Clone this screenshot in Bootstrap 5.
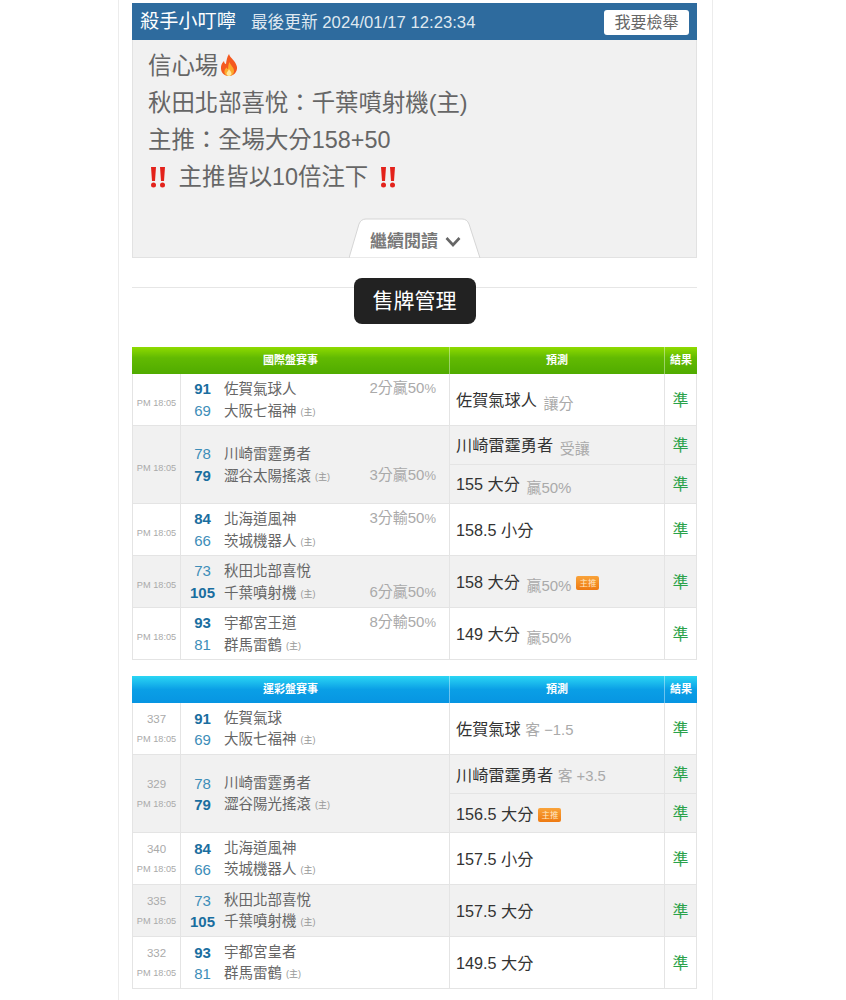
<!DOCTYPE html>
<html lang="zh-Hant"><head><meta charset="utf-8"><title>售牌管理</title>
<link href="https://cdn.jsdelivr.net/npm/bootstrap@5.3.0/dist/css/bootstrap.min.css" rel="stylesheet">
<style>
html,body{height:1000px;overflow:hidden}
body{background:#fff;font-family:"Liberation Sans","Noto Sans CJK TC",sans-serif;color:#333}
.shell{width:595px;height:1000px;margin-left:118px;border-left:1px solid #ececec;border-right:1px solid #ececec;padding:3px 15px 0 13px}
.topbar{height:37px;background:#2e6b9e;padding:2px 8px 0;font-size:16.7px;color:#dfe8f0}
.topbar b{font-weight:400;font-size:19.2px;color:#fff;margin-right:15px}
.checkbtn{background:#fff;color:#666;font-size:16px;width:85px;height:25px;line-height:25px;border-radius:3px;text-align:center}
.post{height:218px;background:#f1f1f1;border:1px solid #e2e2e2;border-top:0;padding:8px 15px;font-size:23.4px;line-height:37px;color:#666}
.post>div:not(.moretab){height:37px}
.post svg{vertical-align:-3px}
.bang-l{margin-right:4px}
.bang-r{margin-left:3px}
.moretab{position:absolute;left:216px;bottom:-1px;width:134px;height:40px;color:#777;font-size:17px;font-weight:700;padding-top:10px;padding-left:21px;line-height:28px}
.moretab>svg.shape{position:absolute;left:0;top:0}
.moretab span,.moretab .chev{position:relative}
.secthead{margin-top:20px;margin-bottom:23px;background:linear-gradient(#e6e6e6,#e6e6e6) 0 9px/100% 1px no-repeat}
.sectlabel{width:122px;height:46px;line-height:45px;background:#222;color:#fff;font-size:21px;border-radius:8px;text-align:center}
table.sheet{table-layout:fixed;width:565px;margin-bottom:16px;border-collapse:separate;border-spacing:0;color:#444}
table.sheet td{border:0 solid #e4e4e4;border-right-width:1px;border-bottom-width:1px;padding:0;vertical-align:middle}
table.sheet tr>td.timecell{border-left-width:1px}
table.sheet th{height:27px;font-size:11px;font-weight:700;color:#fff;text-align:center;padding:0;border-right:1px solid rgba(255,255,255,.4)}
table.sheet th:last-child{border-right:0}
.green th{background:linear-gradient(#8fdb00,#62ba02 40%,#50ab00)}
.blue th{background:linear-gradient(#2bd6f4,#0a9fe6 50%,#0795e2)}
table.sheet tr.shade td{background:#f1f1f1}
.timecell{text-align:center;color:#aaa;font-size:9.2px;line-height:20px}
.green .timecell{padding-top:7px!important}
.timecell em{display:block;font-style:normal;font-size:11.5px}
.pair{display:flex;flex-direction:column;padding-right:13px}
.tm{display:flex;height:22px;line-height:22px;align-items:center;font-size:14.5px;color:#666}
.blue .tm{height:21px;line-height:21px}
.tm u{text-decoration:none;width:43px;text-align:center;font-size:15px;color:#3d8db8;flex:none}
.tm u.win{font-weight:700;color:#1a6e9f}
.tm i{font-style:normal;font-size:9px;color:#999;margin-left:4px;margin-top:2px}
.tm s{text-decoration:none;margin-left:auto;color:#aaa;font-size:15px}
.tm s small{font-size:13px}
.tip{padding-left:6px!important;padding-top:2px!important;font-size:16.2px;color:#333;white-space:nowrap}
.tip.dip{padding-top:4px!important}
.tip span{color:#aaa;font-size:15px;margin-left:2px;vertical-align:-3px}
.tip span.flat{vertical-align:0;margin-left:0;font-size:14.8px}
.host{display:inline-block;width:23px;height:14px;line-height:14px;font-size:8.5px;font-weight:400;text-align:center;color:#ffe9c4;background:linear-gradient(#f9a33a,#ee7a12);border-radius:2px;vertical-align:2px;margin-left:5px}
.ok{text-align:center;color:#2aa24a;font-size:16px;padding-top:2px!important}
.h52{height:52px}.h39{height:39px}
</style></head><body>
<div class="shell">
<div class="topbar d-flex align-items-center"><b>殺手小叮嚀</b><span>最後更新 2024/01/17 12:23:34</span><div class="checkbtn ms-auto">我要檢舉</div></div>
<div class="post position-relative">
<div>信心場<svg width="22" height="24" viewBox="0 0 22 24"><path d="M11 1c1 4 7 7 8 13 .6 5-3.500 9-8 9s-8.500-3-8-9c.2-3 2-5 3-6 .2 2 1 3 2 3 .5-4 1-7 3-10z" fill="#f4591f"/><path d="M11.500 9c.5 3 4.500 5 4.500 9 0 3-2.500 5-5 5s-5-2-4.500-5c.2-2 1.500-3 2.500-3.500 0 1 .5 1.500 1 1.500.2-2.500.5-5 1.500-7z" fill="#fca92b"/><path d="M11 16c.3 1.500 2.500 2.500 2.500 4.500 0 1.500-1.200 2.500-2.500 2.500s-2.500-1-2.500-2.500c0-1.500 2-2.500 2.500-4.500z" fill="#ffe79a"/></svg></div>
<div>秋田北部喜悅：千葉噴射機(主)</div>
<div>主推：全場大分158+50</div>
<div><svg class="bang-l" width="20" height="22" viewBox="0 0 20 22"><path d="M3 1h5l-1 14H4zM12 1h5l-1 14h-3z" fill="#e3221b"/><circle cx="5.500" cy="19" r="2.500" fill="#e3221b"/><circle cx="14.500" cy="19" r="2.500" fill="#e3221b"/></svg> 主推皆以10倍注下 <svg class="bang-r" width="20" height="22" viewBox="0 0 20 22"><path d="M3 1h5l-1 14H4zM12 1h5l-1 14h-3z" fill="#e3221b"/><circle cx="5.500" cy="19" r="2.500" fill="#e3221b"/><circle cx="14.500" cy="19" r="2.500" fill="#e3221b"/></svg></div>
<div class="moretab"><svg class="shape" width="134" height="40" viewBox="0 0 134 40"><path d="M0 40 L10 6 Q12 1 17 1 H113 Q118 1 120 6 L131 40 Z" fill="#fff" stroke="#d5d5d5"/></svg><span>繼續閱讀</span><svg class="chev" width="16" height="12" viewBox="0 0 16 12" style="margin-left:7px;vertical-align:-1px"><path d="M1.500 2 8 9l6.500-7" fill="none" stroke="#666" stroke-width="2.600"/></svg></div>
</div>
<div class="secthead d-flex justify-content-center"><div class="sectlabel">售牌管理</div></div>

<table class="sheet green"><colgroup><col style="width:49px"><col style="width:269px"><col style="width:215px"><col style="width:32px"></colgroup>
<tr><th colspan="2">國際盤賽事</th><th>預測</th><th>結果</th></tr>
<tr class="h52"><td class="timecell">PM 18:05</td><td><div class="pair"><div class="tm"><u class="win">91</u>佐賀氣球人<s>2分贏50<small>%</small></s></div><div class="tm"><u>69</u>大阪七福神<i>(主)</i></div></div></td><td class="tip dip">佐賀氣球人 <span>讓分</span></td><td class="ok">準</td></tr>
<tr class="h39 shade"><td class="timecell" rowspan="2">PM 18:05</td><td rowspan="2"><div class="pair"><div class="tm"><u>78</u>川崎雷霆勇者</div><div class="tm"><u class="win">79</u>澀谷太陽搖滾<i>(主)</i><s>3分贏50<small>%</small></s></div></div></td><td class="tip dip">川崎雷霆勇者 <span>受讓</span></td><td class="ok">準</td></tr>
<tr class="h39 shade"><td class="tip dip">155 大分 <span>贏50%</span></td><td class="ok">準</td></tr>
<tr class="h52"><td class="timecell">PM 18:05</td><td><div class="pair"><div class="tm"><u class="win">84</u>北海道風神<s>3分輸50<small>%</small></s></div><div class="tm"><u>66</u>茨城機器人<i>(主)</i></div></div></td><td class="tip">158.5 小分</td><td class="ok">準</td></tr>
<tr class="h52 shade"><td class="timecell">PM 18:05</td><td><div class="pair"><div class="tm"><u>73</u>秋田北部喜悅</div><div class="tm"><u class="win">105</u>千葉噴射機<i>(主)</i><s>6分贏50<small>%</small></s></div></div></td><td class="tip dip">158 大分 <span>贏50%</span><b class="host">主推</b></td><td class="ok">準</td></tr>
<tr class="h52"><td class="timecell">PM 18:05</td><td><div class="pair"><div class="tm"><u class="win">93</u>宇都宮王道<s>8分輸50<small>%</small></s></div><div class="tm"><u>81</u>群馬雷鶴<i>(主)</i></div></div></td><td class="tip dip">149 大分 <span>贏50%</span></td><td class="ok">準</td></tr>
</table>

<table class="sheet blue"><colgroup><col style="width:49px"><col style="width:269px"><col style="width:215px"><col style="width:32px"></colgroup>
<tr><th colspan="2">運彩盤賽事</th><th>預測</th><th>結果</th></tr>
<tr class="h52"><td class="timecell"><em>337</em>PM 18:05</td><td><div class="pair"><div class="tm"><u class="win">91</u>佐賀氣球</div><div class="tm"><u>69</u>大阪七福神<i>(主)</i></div></div></td><td class="tip">佐賀氣球 <span class="flat">客 −1.5</span></td><td class="ok">準</td></tr>
<tr class="h39 shade"><td class="timecell" rowspan="2"><em>329</em>PM 18:05</td><td rowspan="2"><div class="pair"><div class="tm"><u>78</u>川崎雷霆勇者</div><div class="tm"><u class="win">79</u>澀谷陽光搖滾<i>(主)</i></div></div></td><td class="tip">川崎雷霆勇者 <span class="flat">客 +3.5</span></td><td class="ok">準</td></tr>
<tr class="h39 shade"><td class="tip">156.5 大分<b class="host">主推</b></td><td class="ok">準</td></tr>
<tr class="h52"><td class="timecell"><em>340</em>PM 18:05</td><td><div class="pair"><div class="tm"><u class="win">84</u>北海道風神</div><div class="tm"><u>66</u>茨城機器人<i>(主)</i></div></div></td><td class="tip">157.5 小分</td><td class="ok">準</td></tr>
<tr class="h52 shade"><td class="timecell"><em>335</em>PM 18:05</td><td><div class="pair"><div class="tm"><u>73</u>秋田北部喜悅</div><div class="tm"><u class="win">105</u>千葉噴射機<i>(主)</i></div></div></td><td class="tip">157.5 大分</td><td class="ok">準</td></tr>
<tr class="h52"><td class="timecell"><em>332</em>PM 18:05</td><td><div class="pair"><div class="tm"><u class="win">93</u>宇都宮皇者</div><div class="tm"><u>81</u>群馬雷鶴<i>(主)</i></div></div></td><td class="tip">149.5 大分</td><td class="ok">準</td></tr>
</table>
</div>
<script src="https://cdn.jsdelivr.net/npm/bootstrap@5.3.0/dist/js/bootstrap.bundle.min.js"></script>
</body></html>
